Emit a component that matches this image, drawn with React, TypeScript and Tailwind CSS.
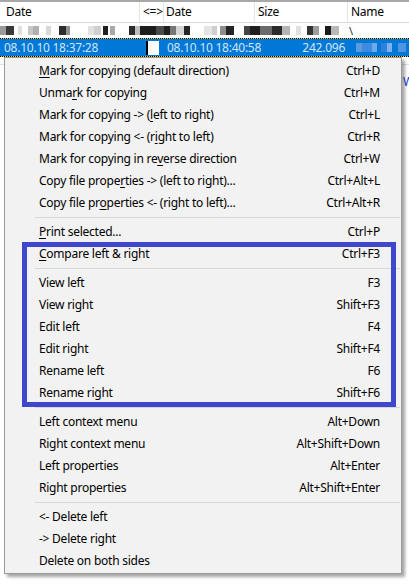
import type { ReactNode } from "react";

type Entry = { label: string; u?: number; shortcut?: string } | "sep";

const MENU: Entry[] = [
  { label: "Mark for copying (default direction)", u: 0, shortcut: "Ctrl+D" },
  { label: "Unmark for copying", u: 4, shortcut: "Ctrl+M" },
  { label: "Mark for copying -> (left to right)", u: 21, shortcut: "Ctrl+L" },
  { label: "Mark for copying <- (right to left)", u: 22, shortcut: "Ctrl+R" },
  { label: "Mark for copying in reverse direction", u: 22, shortcut: "Ctrl+W" },
  { label: "Copy file properties -> (left to right)...", u: 15, shortcut: "Ctrl+Alt+L" },
  { label: "Copy file properties <- (right to left)...", u: 12, shortcut: "Ctrl+Alt+R" },
  "sep",
  { label: "Print selected...", u: 0, shortcut: "Ctrl+P" },
  { label: "Compare left & right", u: 0, shortcut: "Ctrl+F3" },
  "sep",
  { label: "View left", shortcut: "F3" },
  { label: "View right", shortcut: "Shift+F3" },
  { label: "Edit left", shortcut: "F4" },
  { label: "Edit right", shortcut: "Shift+F4" },
  { label: "Rename left", shortcut: "F6" },
  { label: "Rename right", shortcut: "Shift+F6" },
  "sep",
  { label: "Left context menu", shortcut: "Alt+Down" },
  { label: "Right context menu", shortcut: "Alt+Shift+Down" },
  { label: "Left properties", shortcut: "Alt+Enter" },
  { label: "Right properties", shortcut: "Alt+Shift+Enter" },
  "sep",
  { label: "<- Delete left" },
  { label: "-> Delete right" },
  { label: "Delete on both sides" },
];

// pixelated (blurred) file names in the row above the selection
const BLUR = [
  "w-[6px] bg-[#9a9a9a]",
  "w-[8px] bg-[#3a3a3a]",
  "w-[4px] bg-[#e0e0e0] ml-[4px]",
  "w-[5px] bg-[#c8c8c8] ml-[6px]",
  "w-[6px] bg-[#b0b0b0]",
  "w-[5px] bg-[#d8d8d8] ml-[7px]",
  "w-[7px] bg-[#2c2c2c] ml-[8px]",
  "w-[4px] bg-[#909090]",
  "w-[6px] bg-[#e2e2e2] ml-[18px]",
  "w-[7px] bg-[#cfcfcf]",
  "w-[5px] bg-[#202020] ml-[2px]",
  "w-[5px] bg-[#a8a8a8] ml-[2px]",
  "w-[6px] bg-[#2a2a2a] ml-[14px]",
  "w-[5px] bg-[#bdbdbd]",
  "w-[16px] bg-[#1c1c1c]",
  "w-[8px] bg-[#4a4a4a]",
  "w-[6px] bg-[#1f1f1f]",
  "w-[6px] bg-[#777]",
  "w-[8px] bg-[#d4d4d4]",
  "w-[6px] bg-[#262626]",
  "w-[8px] bg-[#e4e4e4] ml-[14px]",
  "w-[5px] bg-[#cfcfcf]",
  "w-[6px] bg-[#8d8d8d] ml-[3px]",
  "w-[8px] bg-[#242424]",
  "w-[6px] bg-[#444] ml-[10px]",
  "w-[10px] bg-[#1e1e1e]",
  "w-[12px] bg-[#6a6a6a]",
  "w-[10px] bg-[#2b2b2b]",
  "w-[8px] bg-[#b5b5b5]",
  "w-[5px] bg-[#e0e0e0] ml-[6px]",
  "w-[6px] bg-[#333] ml-[6px]",
  "w-[6px] bg-[#9c9c9c]",
  "w-[6px] bg-[#1b1b1b] ml-[6px]",
  "w-[8px] bg-[#b8b8b8]",
];

const BLUR_BLUE = [
  "w-[6px] bg-[#5a9be0]",
  "w-[10px] bg-[#3f8ae0]",
  "w-[5px] bg-[#6fa9e8]",
  "w-[6px] bg-[#2f82dc] ml-[4px]",
  "w-[5px] bg-[#7db3ec]",
  "w-[8px] bg-[#4f95e2] ml-[6px]",
  "w-[7px] bg-[#3b88de] ml-[4px]",
];

function Label({ text, u }: { text: string; u?: number }): ReactNode {
  if (u === undefined) return text;
  return (
    <>
      {text.slice(0, u)}
      <span className="underline underline-offset-[2px]">{text[u]}</span>
      {text.slice(u + 1)}
    </>
  );
}

function ContextMenu() {
  return (
    <div className="absolute left-[4px] top-[57px] w-[398px] border border-[#9a9a9a] bg-[#f2f2f2] pt-[2px] pb-[1px] shadow-[3px_3px_3px_rgba(0,0,0,0.35)]">
      {MENU.map((e, i) =>
        e === "sep" ? (
          <div key={i} className="flex h-[7px] items-center pl-[30px] pr-[1px]">
            <div className="h-px w-full bg-[#d7d7d7]" />
          </div>
        ) : (
          <div
            key={i}
            className="flex h-[22px] items-center pl-[34px] pr-[21px] text-[12px] tracking-[-0.25px] text-black"
          >
            <span className="flex-1 whitespace-nowrap">
              <Label text={e.label} u={e.u} />
            </span>
            {e.shortcut && <span className="whitespace-nowrap">{e.shortcut}</span>}
          </div>
        )
      )}
    </div>
  );
}

export default function App() {
  return (
    <div className="relative h-[585px] w-[409px] overflow-hidden bg-white font-['Noto_Sans',sans-serif] text-[12px] tracking-[-0.25px]">
      {/* column header */}
      <div className="flex h-[23px] border-t-2 border-b border-t-[#a8a8a8] border-b-[#dadada] text-black">
        <div className="flex w-[140px] items-center border-r border-[#e5e5e5] pl-[6px]">Date</div>
        <div className="flex w-[24px] items-center whitespace-nowrap border-r border-[#e5e5e5] pl-[3px]">&lt;=&gt;</div>
        <div className="flex w-[91px] items-center border-r border-[#e5e5e5] pl-[2px]">Date</div>
        <div className="flex w-[93px] items-center border-r border-[#e5e5e5] pl-[3px]">Size</div>
        <div className="flex flex-1 items-center pl-[3px]">Name</div>
      </div>

      {/* blurred row */}
      <div className="flex h-[15px] items-center">
        <div className="flex h-[9px] items-stretch">
          {BLUR.map((c, i) => (
            <div key={i} className={c} />
          ))}
        </div>
        <span className="ml-[10px] text-[11px] leading-none text-[#333]">\</span>
      </div>

      {/* selected row */}
      <div className="border-y border-dotted border-black bg-[#e4cf4a]">
        <div className="flex h-[17px] items-center whitespace-nowrap bg-[#0078d7] text-[#d3e6f8]">
          <div className="w-[146px] shrink-0 pl-[4px]">08.10.10 18:37:28</div>
          <div className="h-[14px] w-[13px] shrink-0 border-l-2 border-black bg-white" />
          <div className="w-[100px] shrink-0 pl-[8px]">08.10.10 18:40:58</div>
          <div className="w-[90px] shrink-0 pr-[4px] text-right">242.096</div>
          <div className="flex h-[9px] items-stretch pl-[7px]">
            {BLUR_BLUE.map((c, i) => (
              <div key={i} className={c} />
            ))}
          </div>
        </div>
      </div>

      {/* list rows behind the menu */}
      <div className="h-[8px] border-b border-[#e3e3e3]" />
      <div className="flex h-[34px] items-center pl-[403px] text-[#1a3fe0]">W</div>

      <ContextMenu />

      {/* highlight annotation */}
      <div className="pointer-events-none absolute left-[22px] top-[242px] h-[165px] w-[374px] border-[5px] border-[#3f48cc]" />
    </div>
  );
}
